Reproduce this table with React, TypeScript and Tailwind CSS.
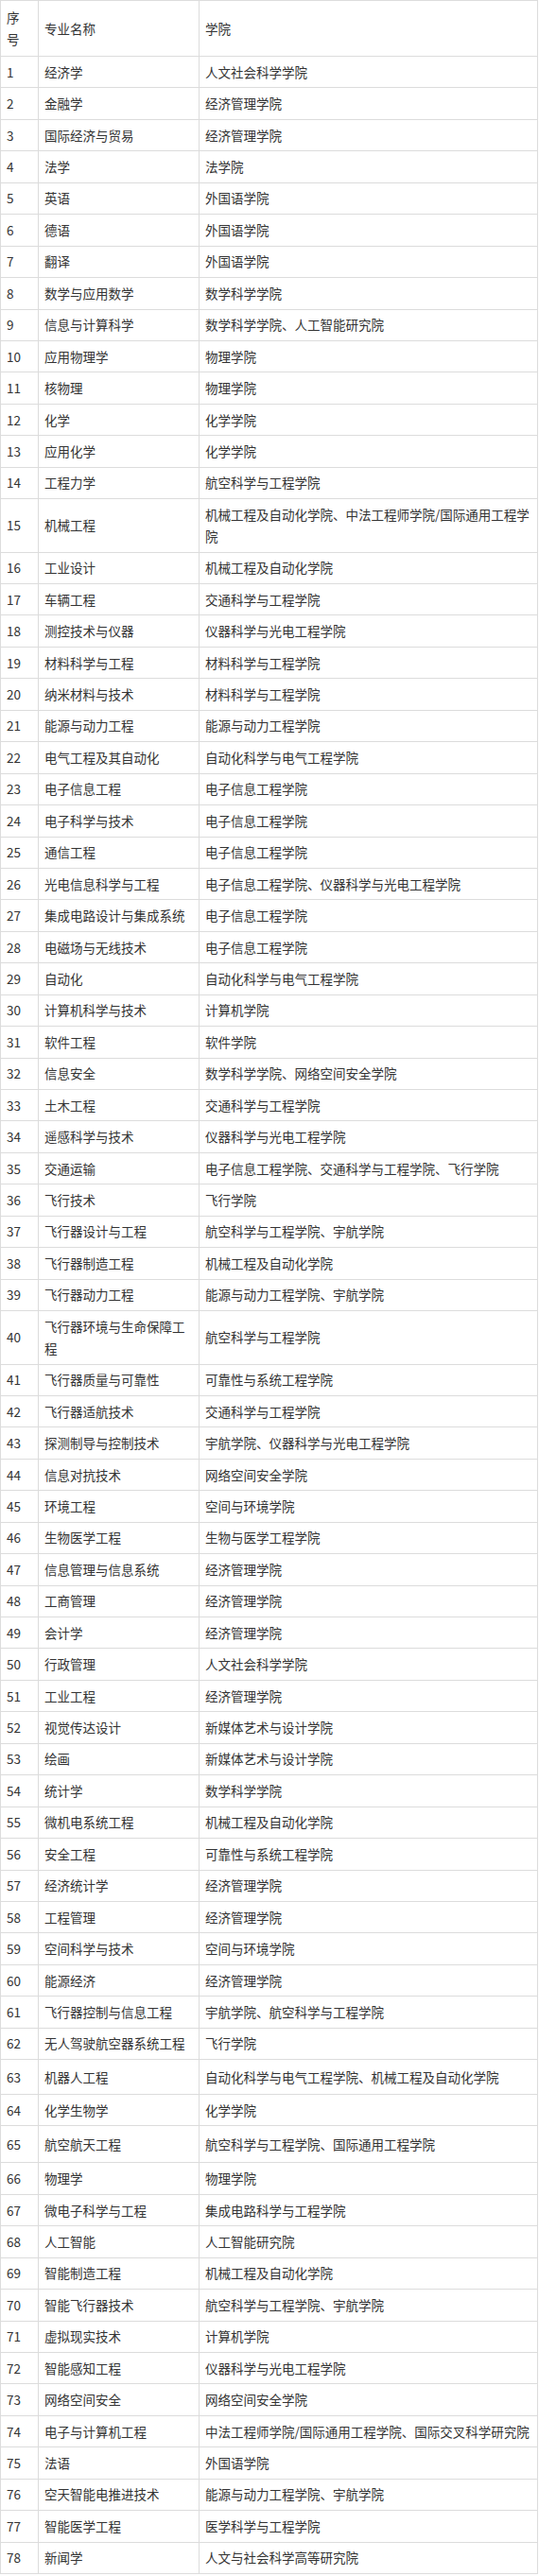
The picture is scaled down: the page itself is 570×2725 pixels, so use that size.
const rows: [string, string][] = [
  ["经济学", "人文社会科学学院"],
  ["金融学", "经济管理学院"],
  ["国际经济与贸易", "经济管理学院"],
  ["法学", "法学院"],
  ["英语", "外国语学院"],
  ["德语", "外国语学院"],
  ["翻译", "外国语学院"],
  ["数学与应用数学", "数学科学学院"],
  ["信息与计算科学", "数学科学学院、人工智能研究院"],
  ["应用物理学", "物理学院"],
  ["核物理", "物理学院"],
  ["化学", "化学学院"],
  ["应用化学", "化学学院"],
  ["工程力学", "航空科学与工程学院"],
  ["机械工程", "机械工程及自动化学院、中法工程师学院/国际通用工程学院"],
  ["工业设计", "机械工程及自动化学院"],
  ["车辆工程", "交通科学与工程学院"],
  ["测控技术与仪器", "仪器科学与光电工程学院"],
  ["材料科学与工程", "材料科学与工程学院"],
  ["纳米材料与技术", "材料科学与工程学院"],
  ["能源与动力工程", "能源与动力工程学院"],
  ["电气工程及其自动化", "自动化科学与电气工程学院"],
  ["电子信息工程", "电子信息工程学院"],
  ["电子科学与技术", "电子信息工程学院"],
  ["通信工程", "电子信息工程学院"],
  ["光电信息科学与工程", "电子信息工程学院、仪器科学与光电工程学院"],
  ["集成电路设计与集成系统", "电子信息工程学院"],
  ["电磁场与无线技术", "电子信息工程学院"],
  ["自动化", "自动化科学与电气工程学院"],
  ["计算机科学与技术", "计算机学院"],
  ["软件工程", "软件学院"],
  ["信息安全", "数学科学学院、网络空间安全学院"],
  ["土木工程", "交通科学与工程学院"],
  ["遥感科学与技术", "仪器科学与光电工程学院"],
  ["交通运输", "电子信息工程学院、交通科学与工程学院、飞行学院"],
  ["飞行技术", "飞行学院"],
  ["飞行器设计与工程", "航空科学与工程学院、宇航学院"],
  ["飞行器制造工程", "机械工程及自动化学院"],
  ["飞行器动力工程", "能源与动力工程学院、宇航学院"],
  ["飞行器环境与生命保障工程", "航空科学与工程学院"],
  ["飞行器质量与可靠性", "可靠性与系统工程学院"],
  ["飞行器适航技术", "交通科学与工程学院"],
  ["探测制导与控制技术", "宇航学院、仪器科学与光电工程学院"],
  ["信息对抗技术", "网络空间安全学院"],
  ["环境工程", "空间与环境学院"],
  ["生物医学工程", "生物与医学工程学院"],
  ["信息管理与信息系统", "经济管理学院"],
  ["工商管理", "经济管理学院"],
  ["会计学", "经济管理学院"],
  ["行政管理", "人文社会科学学院"],
  ["工业工程", "经济管理学院"],
  ["视觉传达设计", "新媒体艺术与设计学院"],
  ["绘画", "新媒体艺术与设计学院"],
  ["统计学", "数学科学学院"],
  ["微机电系统工程", "机械工程及自动化学院"],
  ["安全工程", "可靠性与系统工程学院"],
  ["经济统计学", "经济管理学院"],
  ["工程管理", "经济管理学院"],
  ["空间科学与技术", "空间与环境学院"],
  ["能源经济", "经济管理学院"],
  ["飞行器控制与信息工程", "宇航学院、航空科学与工程学院"],
  ["无人驾驶航空器系统工程", "飞行学院"],
  ["机器人工程", "自动化科学与电气工程学院、机械工程及自动化学院"],
  ["化学生物学", "化学学院"],
  ["航空航天工程", "航空科学与工程学院、国际通用工程学院"],
  ["物理学", "物理学院"],
  ["微电子科学与工程", "集成电路科学与工程学院"],
  ["人工智能", "人工智能研究院"],
  ["智能制造工程", "机械工程及自动化学院"],
  ["智能飞行器技术", "航空科学与工程学院、宇航学院"],
  ["虚拟现实技术", "计算机学院"],
  ["智能感知工程", "仪器科学与光电工程学院"],
  ["网络空间安全", "网络空间安全学院"],
  ["电子与计算机工程", "中法工程师学院/国际通用工程学院、国际交叉科学研究院"],
  ["法语", "外国语学院"],
  ["空天智能电推进技术", "能源与动力工程学院、宇航学院"],
  ["智能医学工程", "医学科学与工程学院"],
  ["新闻学", "人文与社会科学高等研究院"],
];

// a couple of rows in the source sit a little taller than the rest
const padFor = (n: number) => {
  if (n === 63) return "py-[6.4px]";
  if (n === 65) return "py-[7.5px]";
  return "py-[4.72px]";
};

export default function App() {
  return (
    <div className="bg-white font-['Noto_Sans_CJK_SC',sans-serif] text-[13.5px] leading-[23px] text-[#333]">
      <table className="w-[568px] table-fixed border-collapse border border-[#dcdcdc]">
        <colgroup>
          <col className="w-[40px]" />
          <col className="w-[170px]" />
          <col className="w-[358px]" />
        </colgroup>
        <thead>
          <tr>
            <th className="border border-[#dcdcdc] pl-[6px] pr-[4px] py-[6px] text-left align-middle font-normal">
              序<br />号
            </th>
            <th className="border border-[#dcdcdc] pl-[6px] pr-[6px] py-[6px] text-left align-middle font-normal">
              专业名称
            </th>
            <th className="border border-[#dcdcdc] pl-[6px] pr-[6px] py-[6px] text-left align-middle font-normal">
              学院
            </th>
          </tr>
        </thead>
        <tbody>
          {rows.map(([major, school], i) => {
            const n = i + 1;
            const pad = padFor(n);
            return (
              <tr key={n}>
                <td className={`border border-[#dcdcdc] pl-[6px] pr-[2px] align-middle ${pad}`}>{n}</td>
                <td className={`border border-[#dcdcdc] pl-[6px] pr-[6px] align-middle ${pad}`}>{major}</td>
                <td className={`border border-[#dcdcdc] pl-[6px] pr-[6px] align-middle ${pad}`}>{school}</td>
              </tr>
            );
          })}
        </tbody>
      </table>
    </div>
  );
}
